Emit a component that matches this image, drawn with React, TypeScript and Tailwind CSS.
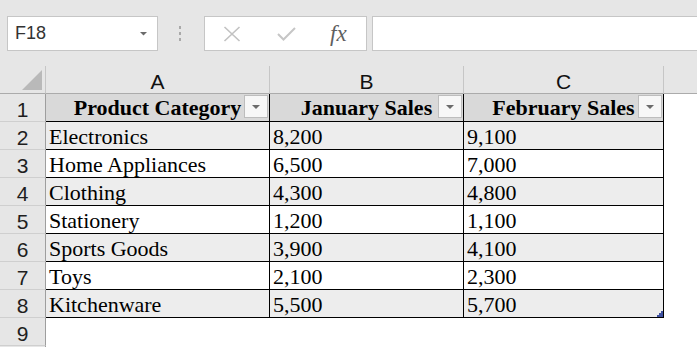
import React from "react";

type Row = { name: string; jan: string; feb: string };

const rows: Row[] = [
  { name: "Electronics", jan: "8,200", feb: "9,100" },
  { name: "Home Appliances", jan: "6,500", feb: "7,000" },
  { name: "Clothing", jan: "4,300", feb: "4,800" },
  { name: "Stationery", jan: "1,200", feb: "1,100" },
  { name: "Sports Goods", jan: "3,900", feb: "4,100" },
  { name: "Toys", jan: "2,100", feb: "2,300" },
  { name: "Kitchenware", jan: "5,500", feb: "5,700" },
];

const serif = { fontFamily: '"Liberation Serif", "Times New Roman", serif' };
const sans = { fontFamily: '"Liberation Sans", Arial, sans-serif' };

function FilterButton() {
  return (
    <div className="absolute right-[1px] top-[1px] flex h-[23px] w-[24px] items-center justify-center border border-[#bdbdbd] bg-[#f7f7f7]">
      <svg width="8" height="4" viewBox="0 0 8 4">
        <path d="M0 0 L8 0 L4 4 Z" fill="#6b6b6b" />
      </svg>
    </div>
  );
}

function RowHeader({ n }: { n?: number }) {
  return (
    <div
      className="h-[28px] overflow-hidden border-b border-r border-b-[#cfcfcf] border-r-[#9e9e9e] bg-[#e6e6e6] text-center text-[21px] leading-[31px] text-[#1e1e1e]"
      style={sans}
    >
      {n}
    </div>
  );
}

export default function App() {
  return (
    <div className="h-[347px] w-[697px] overflow-hidden bg-white">
      {/* Name box and formula bar */}
      <div className="flex h-[66px] items-start bg-[#e6e6e6] pt-[16px]">
        <div
          className="ml-[7px] flex h-[35px] w-[151px] items-center justify-between border border-[#c6c6c6] bg-white pl-[7px] pr-[10px] text-[18px] text-[#333333]"
          style={sans}
        >
          <span>F18</span>
          <svg width="7" height="4" viewBox="0 0 7 4">
            <path d="M0 0 L7 0 L3.5 3.5 Z" fill="#6b6b6b" />
          </svg>
        </div>
        <div className="flex h-[35px] w-[46px] flex-col items-center justify-center gap-[3.3px] pr-[2px]">
          <div className="h-[2.7px] w-[2.7px] bg-[#a9a9a9]" />
          <div className="h-[2.7px] w-[2.7px] bg-[#a9a9a9]" />
          <div className="h-[2.7px] w-[2.7px] bg-[#a9a9a9]" />
        </div>
        <div className="flex h-[35px] w-[163px] items-center border border-[#c6c6c6] bg-white">
          <svg className="ml-[18px]" width="18" height="16" viewBox="0 0 18 16">
            <path d="M1.5 1 L16.5 15 M16.5 1 L1.5 15" stroke="#c2c2c2" strokeWidth="1.6" fill="none" />
          </svg>
          <svg className="ml-[36px]" width="19" height="14" viewBox="0 0 19 14">
            <path d="M1 7 L6.5 12.5 L18 1" stroke="#c6c6c6" strokeWidth="2" fill="none" />
          </svg>
          <span
            className="ml-[34px] text-[23px] italic leading-none text-[#5f5f5f]"
            style={serif}
          >
            fx
          </span>
        </div>
        <div className="ml-[5px] h-[35px] flex-1 border border-r-0 border-[#c6c6c6] bg-white" />
      </div>

      {/* Sheet grid */}
      <div className="grid grid-cols-[46px_224px_194px_200px_1fr]">
        {/* Column headers */}
        <div className="relative h-[28px] border-b border-r border-b-[#ababab] border-r-[#c6c6c6] bg-[#e6e6e6]">
          <svg className="absolute left-[22px] top-[4px]" width="20" height="20" viewBox="0 0 20 20">
            <path d="M20 0 L20 20 L0 20 Z" fill="#b9b9b9" />
          </svg>
        </div>
        {["A", "B", "C"].map((c) => (
          <div
            key={c}
            className="h-[28px] overflow-hidden border-b border-r border-b-[#ababab] border-r-[#c6c6c6] bg-[#e6e6e6] text-center text-[21px] leading-[31px] text-[#111111]"
            style={sans}
          >
            {c}
          </div>
        ))}
        <div className="h-[28px] border-b border-b-[#ababab] bg-[#e6e6e6]" />

        {/* Table header row */}
        <RowHeader n={1} />
        {["Product Category", "January Sales", "February Sales"].map((h) => (
          <div
            key={h}
            className="relative h-[28px] overflow-hidden border-b border-r border-black bg-[#d9d9d9] text-center text-[22px] font-bold leading-[28px] text-black"
            style={serif}
          >
            {h}
            <FilterButton />
          </div>
        ))}
        <div className="h-[28px] bg-white" />

        {/* Data rows */}
        {rows.map((r, i) => {
          const bg = i % 2 === 0 ? "bg-[#ededed]" : "bg-white";
          const cell =
            "relative h-[28px] overflow-hidden border-b border-r border-black pl-[3px] text-[22px] leading-[29px] text-black " +
            bg;
          return (
            <React.Fragment key={r.name}>
              <RowHeader n={i + 2} />
              <div className={cell} style={serif}>
                {r.name}
              </div>
              <div className={cell} style={serif}>
                {r.jan}
              </div>
              <div className={cell} style={serif}>
                {r.feb}
                {i === rows.length - 1 && (
                  <svg className="absolute bottom-0 right-0" width="6" height="6" viewBox="0 0 6 6">
                    <path d="M6 0 L6 6 L0 6 L0 4 L2 4 L2 2 L4 2 L4 0 Z" fill="#3f51a0" />
                  </svg>
                )}
              </div>
              <div className="h-[28px] bg-white" />
            </React.Fragment>
          );
        })}

        {/* Empty rows */}
        <RowHeader n={9} />
        <div className="h-[28px] bg-white" />
        <div className="h-[28px] bg-white" />
        <div className="h-[28px] bg-white" />
        <div className="h-[28px] bg-white" />
        <RowHeader />
      </div>
    </div>
  );
}
